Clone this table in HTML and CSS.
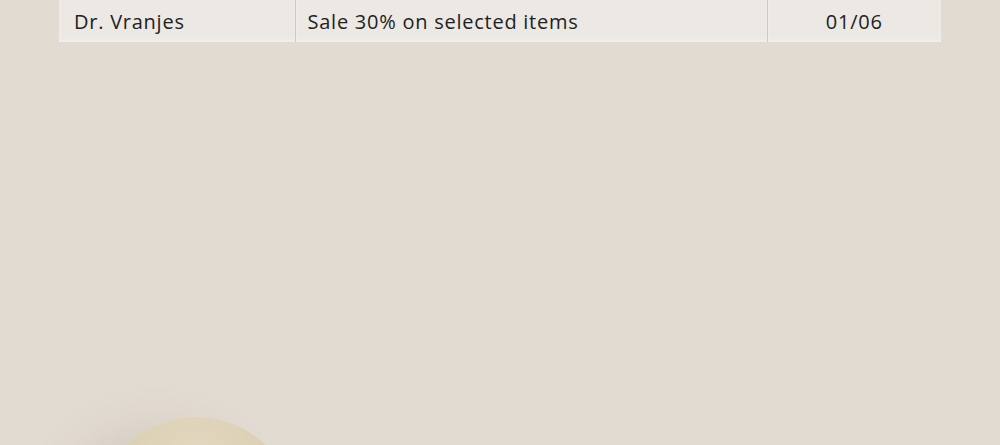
FILE: index.html
```html
<!DOCTYPE html>
<html lang="en">
  <head>
    <meta charset="utf-8" />
    <title>Offers</title>
    <link rel="stylesheet" href="styles.css">
  </head>
  <body>
    <div class="page">
      <table class="offers">
        <tr>
          <td class="brand">Dr. Vranjes</td>
          <td class="deal">Sale 30% on selected items</td>
          <td class="date">01/06</td>
        </tr>
      </table>
      <div class="scene">
        <div class="ball"></div>
      </div>
    </div>
  </body>
</html>
```

FILE: styles.css
```css
body {
  margin: 0;
  background-color: #e2dbd2;
  color: #222;
  font-family: "Open Sans", "Liberation Sans", sans-serif;
  overflow: hidden;
}

.page {
  height: 445px;
  overflow: hidden;
  display: flex;
  flex-direction: column;
}

.offers {
  margin: 0 59px;
  width: 882px;
  border-collapse: collapse;
  table-layout: fixed;
}

.offers td {
  box-sizing: border-box;
  height: 42px;
  padding: 1px 0 0 0;
  background-color: #ece8e3;
  font-size: 20px;
  letter-spacing: 0.75px;
  box-shadow: inset 0 -2px 3px rgba(255, 255, 255, 0.4);
}

.brand {
  width: 236px;
  padding-left: 15px !important;
  border-right: 1px solid #d6c6b4;
}

.deal {
  width: 472px;
  padding-left: 12px !important;
  border-right: 1px solid #d6c6b4;
}

.date {
  text-align: center;
}

.scene {
  flex: 1;
  display: flex;
  align-items: flex-end;
  padding-left: 96px;
}

.ball {
  flex: none;
  width: 200px;
  height: 200px;
  margin-bottom: -172px;
  border-radius: 50%;
  background: radial-gradient(circle at 50% 20%, #e2d8c0 0%, #dacdad 55%, #d3c4a2 100%);
  box-shadow: -40px 10px 40px rgba(170, 150, 130, 0.22);
}
```
